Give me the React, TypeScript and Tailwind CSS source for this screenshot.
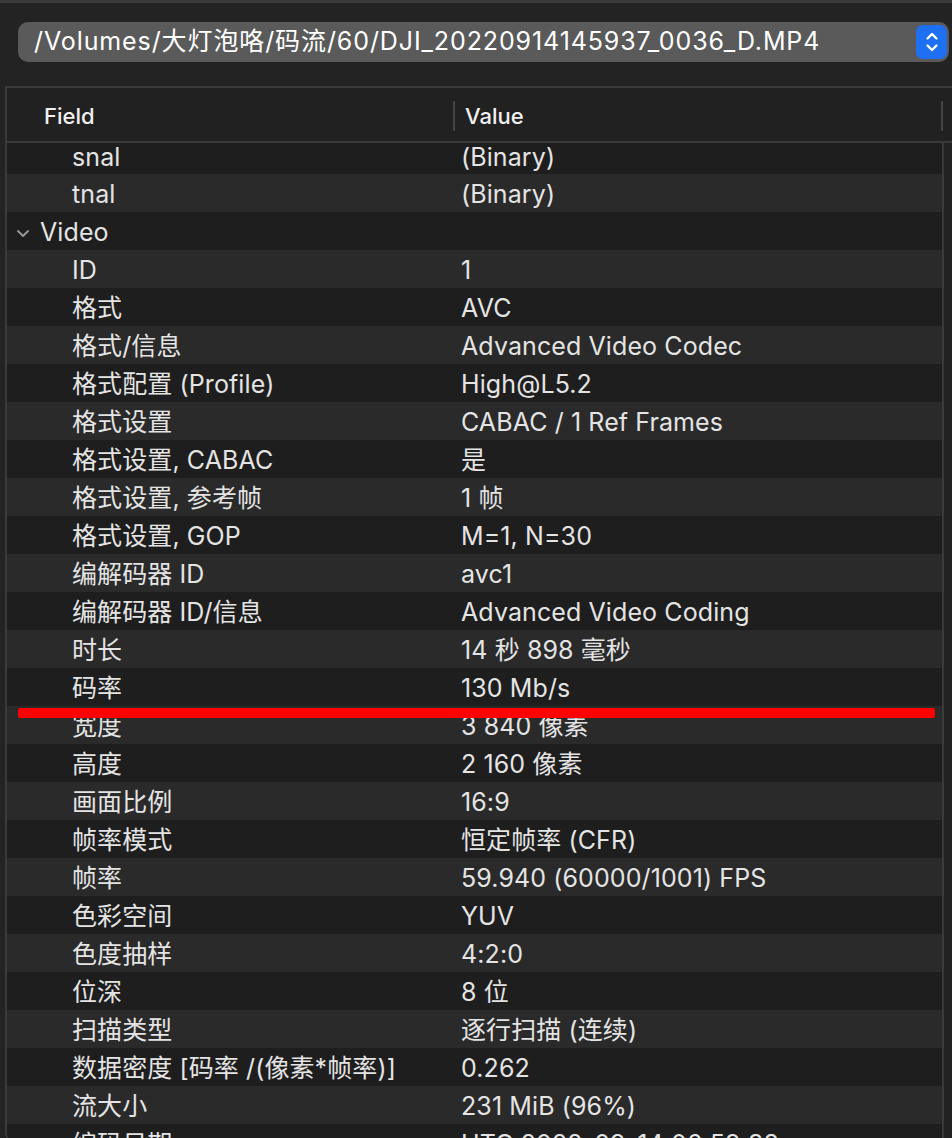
import React from 'react';

type Row = { field: string; value: string; group?: boolean };

const rows: Row[] = [
  { field: 'tnal', value: '(Binary)' },
  { field: 'Video', value: '', group: true },
  { field: 'ID', value: '1' },
  { field: '格式', value: 'AVC' },
  { field: '格式/信息', value: 'Advanced Video Codec' },
  { field: '格式配置 (Profile)', value: 'High@L5.2' },
  { field: '格式设置', value: 'CABAC / 1 Ref Frames' },
  { field: '格式设置, CABAC', value: '是' },
  { field: '格式设置, 参考帧', value: '1 帧' },
  { field: '格式设置, GOP', value: 'M=1, N=30' },
  { field: '编解码器 ID', value: 'avc1' },
  { field: '编解码器 ID/信息', value: 'Advanced Video Coding' },
  { field: '时长', value: '14 秒 898 毫秒' },
  { field: '码率', value: '130 Mb/s' },
  { field: '宽度', value: '3 840 像素' },
  { field: '高度', value: '2 160 像素' },
  { field: '画面比例', value: '16:9' },
  { field: '帧率模式', value: '恒定帧率 (CFR)' },
  { field: '帧率', value: '59.940 (60000/1001) FPS' },
  { field: '色彩空间', value: 'YUV' },
  { field: '色度抽样', value: '4:2:0' },
  { field: '位深', value: '8 位' },
  { field: '扫描类型', value: '逐行扫描 (连续)' },
  { field: '数据密度 [码率 /(像素*帧率)]', value: '0.262' },
  { field: '流大小', value: '231 MiB (96%)' },
  { field: '编码日期', value: 'UTC 2022-09-14 06:59:38' },
];

const font = { fontFamily: 'Inter, "Noto Sans CJK SC", sans-serif' };

function Stepper() {
  return (
    <div className="w-[31px] h-[34px] rounded-[7px] bg-[#1f6ff2] flex items-center justify-center shrink-0">
      <svg width="14" height="24" viewBox="0 0 14 24" fill="none" stroke="white" strokeWidth="2.4" strokeLinecap="round" strokeLinejoin="round">
        <path d="M2.5 8.5 7 4l4.5 4.5" />
        <path d="M2.5 15.5 7 20l4.5-4.5" />
      </svg>
    </div>
  );
}

export default function App() {
  return (
    <div
      className="relative w-[952px] h-[1138px] overflow-hidden bg-[#232323] border-t-[3px] border-[#3a3a3a] text-[#e4e4e4]"
      style={font}
    >
      {/* Path popup */}
      <div className="h-[83px] flex items-start pt-[19px] pl-[18px] pr-[3px]">
        <div className="flex-1 h-[40px] rounded-[10px] bg-[#5a5a5a] flex items-center justify-between pl-[16px] pr-[2px]">
          <span className="text-[25px] text-white tracking-[0.9px] whitespace-nowrap">/Volumes/大灯泡咯/码流/60/DJI_20220914145937_0036_D.MP4</span>
          <Stepper />
        </div>
      </div>

      {/* Table */}
      <div className="ml-[5px] h-[1060px] border-l-2 border-t-2 border-[#3a3a3a] rounded-bl-[14px] overflow-hidden flex flex-col bg-[#1e1e1e]">
        {/* Header */}
        <div className="h-[55px] shrink-0 flex items-center pt-[3px] bg-[#212121] border-b-2 border-[#3a3a3a] text-[22px] font-medium text-[#f0f0f0]">
          <div className="w-[446px] pl-[37px] flex items-center">Field</div>
          <div className="w-[2px] h-[30px] bg-[#444]" />
          <div className="w-[486px] pl-[10px] flex items-center">Value</div>
          <div className="w-[2px] h-[30px] bg-[#444]" />
        </div>

        {/* Body */}
        <div className="flex-1 flex">
          <div className="w-[935px] text-[25px] tracking-[0.1px]">
            <div className="h-[31px] flex items-center bg-[#1e1e1e]">
              <div className="w-[448px] pl-[65px] leading-none -mt-[2px]">snal</div>
              <div className="pl-[6px] leading-none -mt-[2px]">(Binary)</div>
            </div>
            {rows.map((r, i) => (
              <div
                key={r.field}
                className={`h-[38px] flex items-center pt-[3px] ${i % 2 === 0 ? 'bg-[#2a2a2a]' : 'bg-[#1e1e1e]'}`}
              >
                {r.group ? (
                  <div className="w-[448px] pl-[8px] flex items-center gap-[9px]">
                    <svg width="16" height="16" viewBox="0 0 16 16" fill="none" stroke="#9a9a9a" strokeWidth="1.8" strokeLinecap="round" strokeLinejoin="round">
                      <path d="M3 6l5 5 5-5" />
                    </svg>
                    <span>{r.field}</span>
                  </div>
                ) : (
                  <div className="w-[448px] pl-[65px] whitespace-nowrap">{r.field}</div>
                )}
                <div className="pl-[6px] whitespace-nowrap">{r.value}</div>
              </div>
            ))}
          </div>
          <div className="flex-1 border-l-2 border-[#3a3a3a] bg-[#222]" />
        </div>
      </div>

      {/* Red annotation line */}
      <div className="absolute left-[18px] top-[705px] w-[917px] h-[10px] bg-[#ff0000] rounded-[2px]" />
    </div>
  );
}
